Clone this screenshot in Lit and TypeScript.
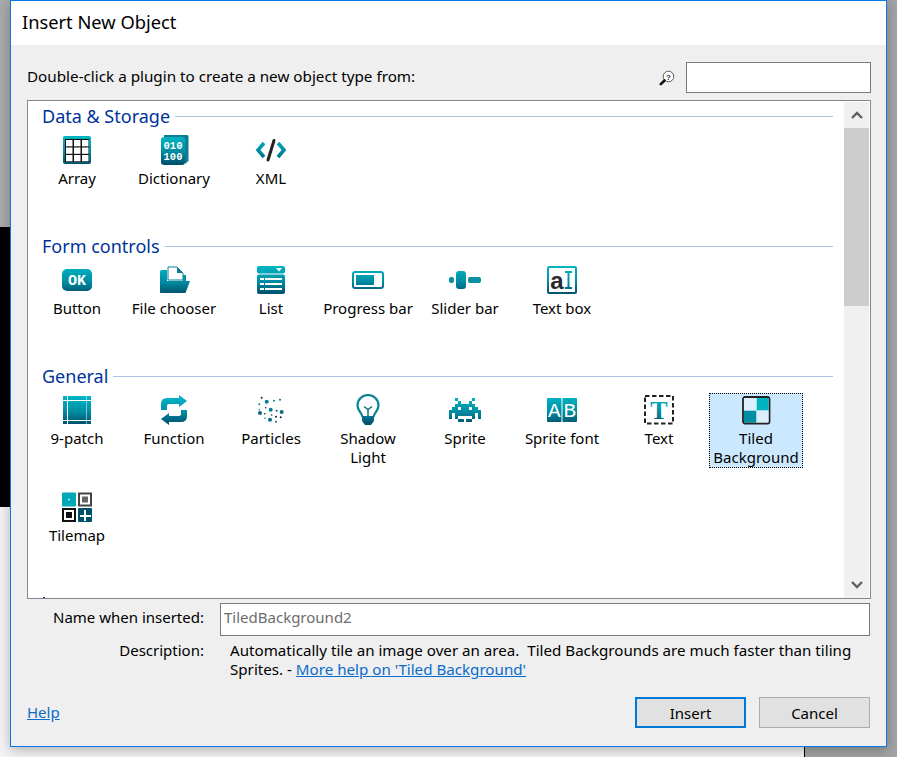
import { LitElement, html, css, svg, nothing } from 'lit';
import { customElement, state } from 'lit/decorators.js';

type IconName =
  | 'array' | 'dictionary' | 'xml'
  | 'button' | 'file' | 'list' | 'progress' | 'slider' | 'textbox'
  | 'ninepatch' | 'function' | 'particles' | 'light' | 'sprite' | 'spritefont' | 'text' | 'tiled' | 'tilemap';

interface Plugin { name: string; icon: IconName }
interface Group { title: string; items: Plugin[] }

const GROUPS: Group[] = [
  {
    title: 'Data & Storage',
    items: [
      { name: 'Array', icon: 'array' },
      { name: 'Dictionary', icon: 'dictionary' },
      { name: 'XML', icon: 'xml' },
    ],
  },
  {
    title: 'Form controls',
    items: [
      { name: 'Button', icon: 'button' },
      { name: 'File chooser', icon: 'file' },
      { name: 'List', icon: 'list' },
      { name: 'Progress bar', icon: 'progress' },
      { name: 'Slider bar', icon: 'slider' },
      { name: 'Text box', icon: 'textbox' },
    ],
  },
  {
    title: 'General',
    items: [
      { name: '9-patch', icon: 'ninepatch' },
      { name: 'Function', icon: 'function' },
      { name: 'Particles', icon: 'particles' },
      { name: 'Shadow\nLight', icon: 'light' },
      { name: 'Sprite', icon: 'sprite' },
      { name: 'Sprite font', icon: 'spritefont' },
      { name: 'Text', icon: 'text' },
      { name: 'Tiled\nBackground', icon: 'tiled' },
      { name: 'Tilemap', icon: 'tilemap' },
    ],
  },
];

const INVADER = [
  '..X.....X..',
  '...X...X...',
  '..XXXXXXX..',
  '.XX.XXX.XX.',
  'XXXXXXXXXXX',
  'X.XXXXXXX.X',
  'X.X.....X.X',
  '...XX.XX...',
];

const DOTS: Array<[number, number, number, string]> = [
  [6.7, 3.7, 1, '#123'], [11.7, 7.7, 2, '#0a7c90'], [19, 6.7, 1, '#0a7c90'], [25, 5.7, 1, '#0a6a80'],
  [4.3, 10.3, 1, '#0a7c90'], [10.7, 13.7, 0.8, '#123'], [15.7, 15.7, 2, '#0a7c90'], [21.7, 16.7, 1, '#0a5a70'],
  [4.3, 15.7, 0.8, '#0a7c90'], [5, 19, 2, '#0a6a80'], [9.7, 19.7, 0.8, '#123'], [26.7, 18, 2, '#0a6a80'],
  [15, 25.7, 2, '#0a6a80'], [21, 22.7, 1, '#123'], [25.7, 23.3, 1, '#123'], [10, 24.3, 0.8, '#0a7c90'],
  [21, 27.7, 1, '#0a6a80'], [16.7, 21, 0.8, '#123'],
];

const TEAL = 'url(#teal)';

function iconBody(name: IconName) {
  switch (name) {
    case 'array':
      return svg`<rect x="2" y="2" width="28" height="28" rx="2" fill=${TEAL}/>
        <rect x="4" y="5" width="24" height="23" fill="#111"/>
        ${[5, 13, 21].map((x) => [6, 13.5, 21].map((y) => svg`<rect x=${x} y=${y} width="6.5" height="6.3" fill="#fff"/>`))}`;
    case 'dictionary':
      return svg`<path d="M6 1H29a1.5 1.5 0 0 1 1.5 1.5V27L27 30V5H6Z" fill="#0a7f94"/>
        <rect x="3" y="3" width="24" height="28" rx="3" fill=${TEAL}/>
        <text x="15" y="15" class="t mono" font-size="10.5" text-anchor="middle" fill="#fff">010</text>
        <text x="15" y="26" class="t mono" font-size="10.5" text-anchor="middle" fill="#fff">100</text>`;
    case 'xml':
      return svg`<path d="M9 9 3 16l6 7" fill="none" stroke=${TEAL} stroke-width="3.6"/>
        <path d="M23 9l6 7-6 7" fill="none" stroke=${TEAL} stroke-width="3.6"/>
        <path d="M19 6.5 13 26" fill="none" stroke="#222" stroke-width="3" stroke-linecap="round"/>`;
    case 'button':
      return svg`<rect x="1" y="5" width="30" height="22" rx="5" fill=${TEAL}/>
        <text x="16" y="21" class="t mono" font-size="15" text-anchor="middle" fill="#fff">OK</text>`;
    case 'file':
      return svg`<path d="M2 8a2 2 0 0 1 2-2h5v14L3 29H2Z" fill=${TEAL}/>
        <path d="M10 3h9l6 6v7H10Z" fill="#fff" stroke="#0a7f94" stroke-width="1"/>
        <path d="M19 3l6 6h-6Z" fill="#0a7f94"/>
        <path d="M25 11h3v6h-3Z" fill="#0a8fa2"/>
        <path d="M8.5 17H32l-4.5 12H3Z" fill=${TEAL}/>`;
    case 'list':
      return svg`<rect x="2" y="2" width="28" height="7.5" rx="2" fill=${TEAL}/>
        <path d="M21 4h6l-3 3.5Z" fill="#fff"/>
        <rect x="2" y="10.5" width="28" height="19.5" rx="2" fill=${TEAL}/>
        ${[14, 19, 24].map((y) => svg`<rect x="5" y=${y} width="4" height="2" fill="#fff"/><rect x="10" y=${y} width="17" height="2" fill="#fff"/>`)}`;
    case 'progress':
      return svg`<rect x="1" y="8" width="30" height="16" rx="2" fill="#fff" stroke=${TEAL} stroke-width="2"/>
        <rect x="4" y="11" width="18" height="10" fill=${TEAL}/>`;
    case 'slider':
      return svg`<rect x="0" y="13" width="5" height="6" rx="2" fill="#0a8fa2"/>
        <rect x="7" y="7" width="10" height="18" rx="3" fill=${TEAL}/>
        <rect x="19" y="13" width="13" height="6" rx="2" fill="#0a8fa2"/>`;
    case 'textbox':
      return svg`<rect x="2" y="3" width="28" height="26" rx="1" fill="#fff" stroke=${TEAL} stroke-width="2"/>
        <text x="11" y="25" class="t sans" font-size="24" text-anchor="middle" fill="#2b2b2b">a</text>
        <path d="M19 7h7v2h-2.5v14H26v2h-7v-2h2.5V9H19Z" fill=${TEAL}/>`;
    case 'ninepatch':
      return svg`${[[2, 4], [7, 18.5], [26, 4]].map(([x, w]) =>
        [[2, 4], [7, 19], [27, 3]].map(([y, h]) => svg`<rect x=${x} y=${y} width=${w} height=${h} fill=${TEAL}/>`))}`;
    case 'function':
      return svg`<path d="M3 16V10Q3 4 9 4H21V1L29 7 21 13V10H11Q9 10 9 12V16Z" fill=${TEAL}/>
        <path d="M29 16V22Q29 28 23 28H11V31L3 25 11 19V22H21Q23 22 23 20V16Z" fill=${TEAL}/>`;
    case 'particles':
      return svg`${DOTS.map(([x, y, r, c]) => svg`<circle cx=${x} cy=${y} r=${r} fill=${c}/>`)}`;
    case 'light':
      return svg`<path d="M10.5 23C10 18.5 5.5 17 5.5 11.5a10.5 10.5 0 0 1 21 0C26.5 17 22 18.5 21.5 23" fill="#fff" stroke="#0a8296" stroke-width="2.2"/>
        <path d="M12 12.5l4 3 4-3M16 15.5V22" fill="none" stroke="#0a7288" stroke-width="1.5"/>
        <path d="M10 22h12v5l-3 4h-6l-3-4Z" fill=${TEAL}/>`;
    case 'sprite':
      return svg`<g shape-rendering="crispEdges">${INVADER.map((row, r) =>
        [...row].map((c, i) => (c === 'X' ? svg`<rect x=${i * 2.91} y=${4.3 + r * 2.93} width="2.95" height="2.97" fill=${TEAL}/>` : nothing)))}</g>`;
    case 'spritefont':
      return svg`<rect x="1" y="4" width="14.5" height="24" rx="1" fill=${TEAL}/>
        <rect x="16.5" y="4" width="14.5" height="24" rx="1" fill=${TEAL}/>
        <text x="8.2" y="23" class="mono" font-size="21" text-anchor="middle" fill="#fff">A</text>
        <text x="23.8" y="23" class="mono" font-size="21" text-anchor="middle" fill="#fff">B</text>`;
    case 'text':
      return svg`<rect x="2" y="2" width="28" height="27.5" fill="none" stroke="#222" stroke-width="2" stroke-dasharray="4.5 2.5"/>
        <text x="16" y="25" class="t serif" font-size="26" text-anchor="middle" fill=${TEAL}>T</text>`;
    case 'tiled':
      return svg`<rect x="3" y="3" width="26.5" height="26.5" rx="2" fill="none" stroke="#222" stroke-width="1.8"/>
        <rect x="16.5" y="4" width="12" height="12.5" fill="#00b3c0"/>
        <rect x="4" y="16.5" width="12.5" height="12" fill="#008ea3"/>
        <rect x="4" y="4" width="12.5" height="12.5" fill="#dceefc"/>
        <rect x="16.5" y="16.5" width="12" height="12" fill="#dceefc"/>`;
    case 'tilemap':
      return svg`<rect x="1" y="1.5" width="14" height="14" rx="1" fill="#00a8b8"/>
        <rect x="7.3" y="7.8" width="1.5" height="1.5" fill="#fff"/>
        <rect x="17" y="1.5" width="14" height="14" fill="#444"/>
        <rect x="19" y="3.5" width="10" height="10" fill="#fff"/>
        <rect x="21" y="5.5" width="6" height="6" fill="#666"/>
        <rect x="1" y="17" width="14" height="14" fill="#111"/>
        <rect x="3" y="19" width="10" height="10" fill="#fff"/>
        <rect x="5" y="21" width="6" height="6" fill="#111"/>
        <rect x="17" y="17" width="14" height="14" rx="1" fill="#00506c"/>
        <path d="M23 19h2v5h5v2h-5v4h-2v-4h-4v-2h4Z" fill="#fff"/>`;
  }
}

@customElement('app-root')
export class AppRoot extends LitElement {
  @state() private selected = 'Tiled\nBackground';

  private _item(item: Plugin) {
    const active = item.name === this.selected;
    return html`
      <div class="item ${active ? 'item--active' : ''}" @click=${() => (this.selected = item.name)}>
        <svg class="icon" viewBox="0 0 32 32" width="32" height="32">${iconBody(item.icon)}</svg>
        <div class="item-label">${item.name}</div>
      </div>
    `;
  }

  private _group(group: Group) {
    return html`
      <section class="group">
        <header class="group-head">
          <span class="group-title">${group.title}</span>
          <span class="group-rule"></span>
        </header>
        <div class="items">${group.items.map((item) => this._item(item))}</div>
      </section>
    `;
  }

  override render() {
    return html`
      <div class="desk-left"></div>
      <div class="desk-black"></div>
      <div class="desk-white"></div>
      <div class="desk-line"></div>

      <div class="window">
        <div class="title">Insert New Object</div>
        <div class="body">
          <div class="top-row">
            <span class="prompt">Double-click a plugin to create a new object type from:</span>
            <svg class="search-icon" viewBox="0 0 16 16" width="16" height="16">
              <circle cx="9.5" cy="6.5" r="5.3" fill="#fff" stroke="#555" stroke-width="1"/>
              <text x="9.5" y="9.5" class="t sans" font-size="8" text-anchor="middle" fill="#333">?</text>
              <path d="M5.5 10.5 1.8 14.2" stroke="#111" stroke-width="2.6" stroke-linecap="round"/>
            </svg>
            <input class="search" type="text" aria-label="Search" />
          </div>

          <div class="listbox">
            <div class="scroll">
              ${GROUPS.map((g) => this._group(g))}
              <!-- top of the next heading, scrolled almost out of view -->
              <div class="next-head"></div>
            </div>
            <div class="scrollbar">
              <div class="sb-btn">
                <svg viewBox="0 0 12 8" width="12" height="8"><path d="M1 7l5-5 5 5" fill="none" stroke="#606060" stroke-width="2.4"/></svg>
              </div>
              <div class="sb-thumb"></div>
              <div class="sb-track"></div>
              <div class="sb-btn">
                <svg viewBox="0 0 12 8" width="12" height="8"><path d="M1 1l5 5 5-5" fill="none" stroke="#606060" stroke-width="2.4"/></svg>
              </div>
            </div>
          </div>

          <div class="name-row">
            <label class="field-label">Name when inserted:</label>
            <input class="name" type="text" .value=${'TiledBackground2'} />
          </div>

          <div class="desc-row">
            <span class="field-label">Description:</span>
            <span class="desc">Automatically tile an image over an area.&nbsp; Tiled Backgrounds are much faster than tiling<br />Sprites. - <a class="link" href="#">More help on 'Tiled Background'</a></span>
          </div>

          <div class="footer">
            <a class="help" href="#">Help</a>
            <button class="btn btn--default">Insert</button>
            <button class="btn">Cancel</button>
          </div>
        </div>
      </div>

      <svg class="defs" width="0" height="0">
        <defs>
          <linearGradient id="teal" gradientUnits="userSpaceOnUse" x1="0" y1="3" x2="0" y2="30">
            <stop offset="0" stop-color="#00b4c2"/>
            <stop offset="0.55" stop-color="#008ca2"/>
            <stop offset="1" stop-color="#00506c"/>
          </linearGradient>
        </defs>
      </svg>
    `;
  }

  static styles = css`
    :host {
      display: block;
      position: relative;
      width: 897px;
      height: 757px;
      overflow: hidden;
      background: #a2a4a6;
      font-family: 'Noto Sans', sans-serif;
      font-size: 15px;
      line-height: 19px;
      color: #000;
    }

    /* desktop behind the dialog */
    .desk-left { position: absolute; left: 0; top: 0; width: 10px; height: 227px; background: #a8aaac; }
    .desk-black { position: absolute; left: 0; top: 227px; width: 10px; height: 280px; background: #000; }
    .desk-white { position: absolute; left: 0; top: 507px; width: 804px; height: 250px; background: #f4f4f4; }
    .desk-line { position: absolute; left: 804px; top: 700px; width: 1px; height: 57px; background: #000; }

    .window {
      position: absolute;
      left: 10px;
      top: 0;
      width: 877px;
      height: 747px;
      box-sizing: border-box;
      display: flex;
      flex-direction: column;
      background: #efefef;
      border: 1px solid #0a78ea;
      box-shadow: 0 3px 12px rgba(0, 0, 0, 0.28);
    }

    .title {
      height: 44px;
      box-sizing: border-box;
      flex: none;
      display: flex;
      align-items: center;
      padding: 0 0 4px 11px;
      background: #fff;
      font-size: 18.3px;
    }

    .body {
      flex: 1;
      display: flex;
      flex-direction: column;
      padding: 0 15px 18px 16px;
      min-height: 0;
    }

    .top-row {
      display: flex;
      align-items: center;
      height: 31px;
      margin-top: 17px;
    }

    .prompt { flex: 1; font-size: 15.24px; padding-bottom: 2px; }
    .search-icon { margin-right: 11px; }

    input {
      box-sizing: border-box;
      margin: 0;
      background: #fff;
      border: 1px solid #7a7a7a;
      font: inherit;
      outline: none;
    }

    .search { width: 185px; height: 31px; }

    .listbox {
      display: flex;
      height: 499px;
      margin-top: 7px;
      box-sizing: border-box;
      background: #fff;
      border: 1px solid #828790;
    }

    .scroll {
      flex: 1;
      min-width: 0;
      overflow: hidden;
      padding: 5px 11px 0 14px;
    }

    .group { margin-bottom: 28px; }

    .group-head {
      display: flex;
      align-items: center;
      gap: 5px;
      height: 20px;
      margin-bottom: 7px;
    }

    .group-title {
      font-size: 18px;
      color: #003399;
      white-space: nowrap;
    }

    .group-rule { flex: 1; height: 1px; background: #b0c0e4; }

    .next-head {
      width: 2px;
      height: 2px;
      margin: 32px 0 0 1px;
      background: #003399;
    }

    .items {
      display: grid;
      grid-template-columns: repeat(8, 94px);
      column-gap: 3px;
      row-gap: 22px;
      margin-left: -12px;
    }

    .item {
      box-sizing: border-box;
      height: 75px;
      display: flex;
      flex-direction: column;
      align-items: center;
      border: 1px solid transparent;
    }

    .item--active {
      background: #cce8ff;
      border: 1px dotted #000;
    }

    .icon { flex: none; margin-bottom: 3px; }

    .item-label {
      text-align: center;
      white-space: pre-line;
    }

    .t { font-weight: 700; }
    .mono { font-family: 'Liberation Mono', monospace; }
    .sans { font-family: 'Liberation Sans', sans-serif; }
    .serif { font-family: 'Liberation Serif', serif; }

    .scrollbar {
      flex: none;
      width: 25px;
      margin: 1px 1px 0 0;
      display: flex;
      flex-direction: column;
      background: #f0f0f0;
    }

    .sb-btn {
      flex: none;
      height: 26px;
      display: flex;
      align-items: center;
      justify-content: center;
    }

    .sb-thumb { flex: none; height: 178px; background: #cdcdcd; }
    .sb-track { flex: 1; }

    .name-row {
      display: flex;
      align-items: flex-start;
      gap: 16px;
      height: 33px;
      margin: 4px 1px 0 0;
    }

    .name-row .field-label { padding-top: 5px; }

    .field-label {
      flex: none;
      width: 177px;
      text-align: right;
    }

    .name {
      flex: 1;
      height: 33px;
      padding: 0 3px 5px;
      color: #6d6d6d;
    }

    .desc-row {
      display: flex;
      gap: 26px;
      margin-top: 5px;
      white-space: nowrap;
    }

    .desc { font-size: 15.15px; }

    .link, .help { color: #0a6ccc; text-decoration: underline; }

    .footer {
      margin-top: auto;
      margin-right: 1px;
      display: flex;
      align-items: center;
      gap: 13px;
    }

    .help { margin-right: auto; }

    .btn {
      box-sizing: border-box;
      width: 111px;
      height: 31px;
      padding: 1px 0 0;
      background: #e1e1e1;
      border: 1px solid #adadad;
      font: inherit;
      color: #000;
    }

    .btn--default { border: 2px solid #0078d7; }

    .defs { position: absolute; }
  `;
}

declare global {
  interface HTMLElementTagNameMap {
    'app-root': AppRoot;
  }
}
